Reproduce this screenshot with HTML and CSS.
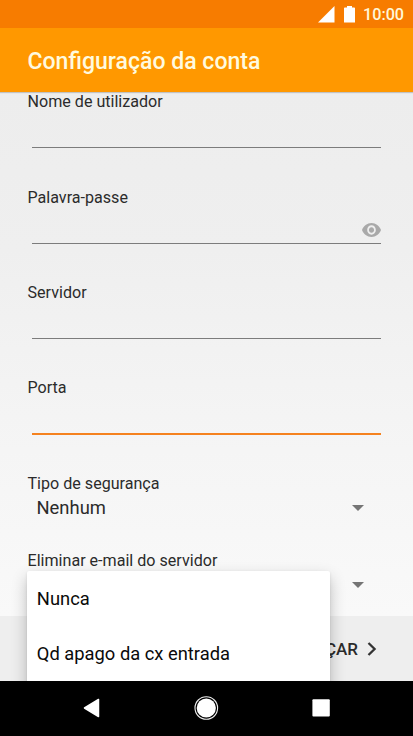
FILE: index.html
```
<!DOCTYPE html>
<html lang="pt">
<head>
<meta charset="utf-8">
<title>Configuração da conta</title>
<link rel="stylesheet" href="styles.css">
</head>
<body>
<div class="screen">
  <div class="status">
    <svg class="signal" width="17" height="17" viewBox="0 0 17 17"><path d="M0 16.500 16.500 0V16.500z" fill="#fff"/></svg>
    <svg class="battery" width="11" height="17" viewBox="0 0 11 17"><path d="M3 0h5v1.500h2.200q.8 0 .8.8V16.500H0V2.300q0-.8.8-.8H3z" fill="#fff"/></svg>
    <span class="clock">10:00</span>
  </div>
  <header class="appbar"><h1>Configuração da conta</h1></header>
  <main class="form">
    <div class="field"><label>Nome de utilizador</label><div class="input"></div></div>
    <div class="field"><label>Palavra-passe</label><div class="input">
      <svg class="eye" width="19" height="14" viewBox="1 4.500 22 15" preserveAspectRatio="none"><path fill="#a9a9a9" d="M12 4.500C7 4.500 2.730 7.610 1 12c1.730 4.390 6 7.500 11 7.500s9.270-3.110 11-7.500c-1.730-4.390-6-7.500-11-7.500zM12 17c-2.760 0-5-2.240-5-5s2.240-5 5-5 5 2.240 5 5-2.240 5-5 5zm0-8c-1.660 0-3 1.340-3 3s1.340 3 3 3 3-1.340 3-3-1.340-3-3-3z"/></svg>
    </div></div>
    <div class="field"><label>Servidor</label><div class="input"></div></div>
    <div class="field"><label>Porta</label><div class="input focused"></div></div>
    <div class="select"><label>Tipo de segurança</label><div class="value"><span>Nenhum</span><svg width="12" height="6" viewBox="0 0 12 6"><path d="M0 0h12L6 6z" fill="#757575"/></svg></div></div>
    <div class="select"><label>Eliminar e-mail do servidor</label><div class="value"><span></span><svg width="12" height="6" viewBox="0 0 12 6"><path d="M0 0h12L6 6z" fill="#757575"/></svg></div></div>
  </main>
  <footer class="footer">
    <span>AVANÇAR</span>
    <svg width="10" height="14" viewBox="0 0 10 14"><path d="M1.500 1 7.600 7 1.500 13" fill="none" stroke="#333" stroke-width="2.300"/></svg>
  </footer>
  <div class="menu-area"><div class="menu"><div class="item">Nunca</div><div class="item">Qd apago da cx entrada</div></div></div>
  <nav class="nav">
    <svg width="17" height="20" viewBox="0 0 17 20"><path d="M1.500 10 15.500 1.500V18.500z" fill="#fff" stroke="#fff" stroke-width="1.500" stroke-linejoin="round"/></svg>
    <svg width="26" height="26" viewBox="0 0 26 26"><circle cx="13.300" cy="13" r="11.300" fill="none" stroke="#eee" stroke-width="1.100"/><circle cx="13.300" cy="13" r="9.600" fill="#fff"/></svg>
    <svg width="18" height="18" viewBox="0 0 18 18"><rect x=".4" y=".2" width="17.400" height="17.400" rx="1" fill="#fff"/></svg>
  </nav>
</div>
</body>
</html>
```
FILE: styles.css
```
* { box-sizing: border-box; }
body { margin: 0; font-family: Roboto, sans-serif; color: #2b2b2b; }
svg { display: block; flex: none; }
.screen {
  position: relative;
  display: flex;
  flex-direction: column;
  width: 413px;
  height: 736px;
  overflow: hidden;
  background: linear-gradient(#ededed 92px, #efefef 250px, #f5f5f5 450px, #f9f9f9 616px);
}
.status {
  flex: none;
  display: flex;
  align-items: center;
  justify-content: flex-end;
  height: 28px;
  padding-right: 9px;
  background: #f77c00;
}
.battery { margin-left: 9px; }
.clock {
  width: 41px;
  margin-left: 8px;
  padding-top: 1px;
  font-size: 16.200px;
  font-weight: 500;
  line-height: 28px;
  color: #fff7d8;
}
.appbar {
  flex: none;
  height: 64px;
  padding: 2px 27.500px 0;
  background: #ff9800;
  box-shadow: 0 1px 1px rgba(0, 0, 0, .18);
}
.appbar h1 {
  margin: 0;
  font-size: 23.060px;
  font-weight: 500;
  line-height: 64px;
  color: #fffadf;
  white-space: nowrap;
}
.form { flex: none; height: 524px; padding: 0 27.500px; overflow: hidden; }
label { display: block; font-size: 16.100px; line-height: 20px; white-space: nowrap; }
.field { height: 95.400px; }
.field + .field { position: relative; }
.input {
  display: flex;
  justify-content: flex-end;
  align-items: flex-end;
  height: 36px;
  margin: 0 4.500px;
  border-bottom: 1px solid #7c7c7c;
}
.input.focused { height: 37px; border-bottom: 2px solid #f5821f; }
.form { padding-top: .200px; }
.eye { margin-bottom: 6px; }
.select { height: 77px; }
.value {
  display: flex;
  justify-content: space-between;
  align-items: center;
  height: 28px;
  padding: 0 21.500px 0 9px;
  font-size: 18.400px;
  line-height: 28px;
}
.footer {
  flex: none;
  display: flex;
  align-items: center;
  justify-content: flex-end;
  gap: 9px;
  height: 65px;
  padding-right: 36px;
  background: #eee;
  font-size: 17px;
  font-weight: 500;
}
.menu-area {
  position: absolute;
  left: 0;
  top: 540px;
  width: 413px;
  height: 141px;
  padding: 30.500px 0 0 27.300px;
  overflow: hidden;
}
.menu {
  width: 303px;
  height: 120px;
  background: #fff;
  border-radius: 2px;
  box-shadow: 0 7px 16px rgba(0, 0, 0, .24), 0 1px 3px rgba(0, 0, 0, .1);
}
.item {
  height: 55px;
  padding: 0 9.500px;
  font-size: 18.350px;
  line-height: 55px;
  color: #0a0a0a;
}
.nav {
  flex: none;
  display: flex;
  align-items: center;
  justify-content: space-between;
  height: 55px;
  padding: 0 83px 1px;
  background: #000;
}
```
